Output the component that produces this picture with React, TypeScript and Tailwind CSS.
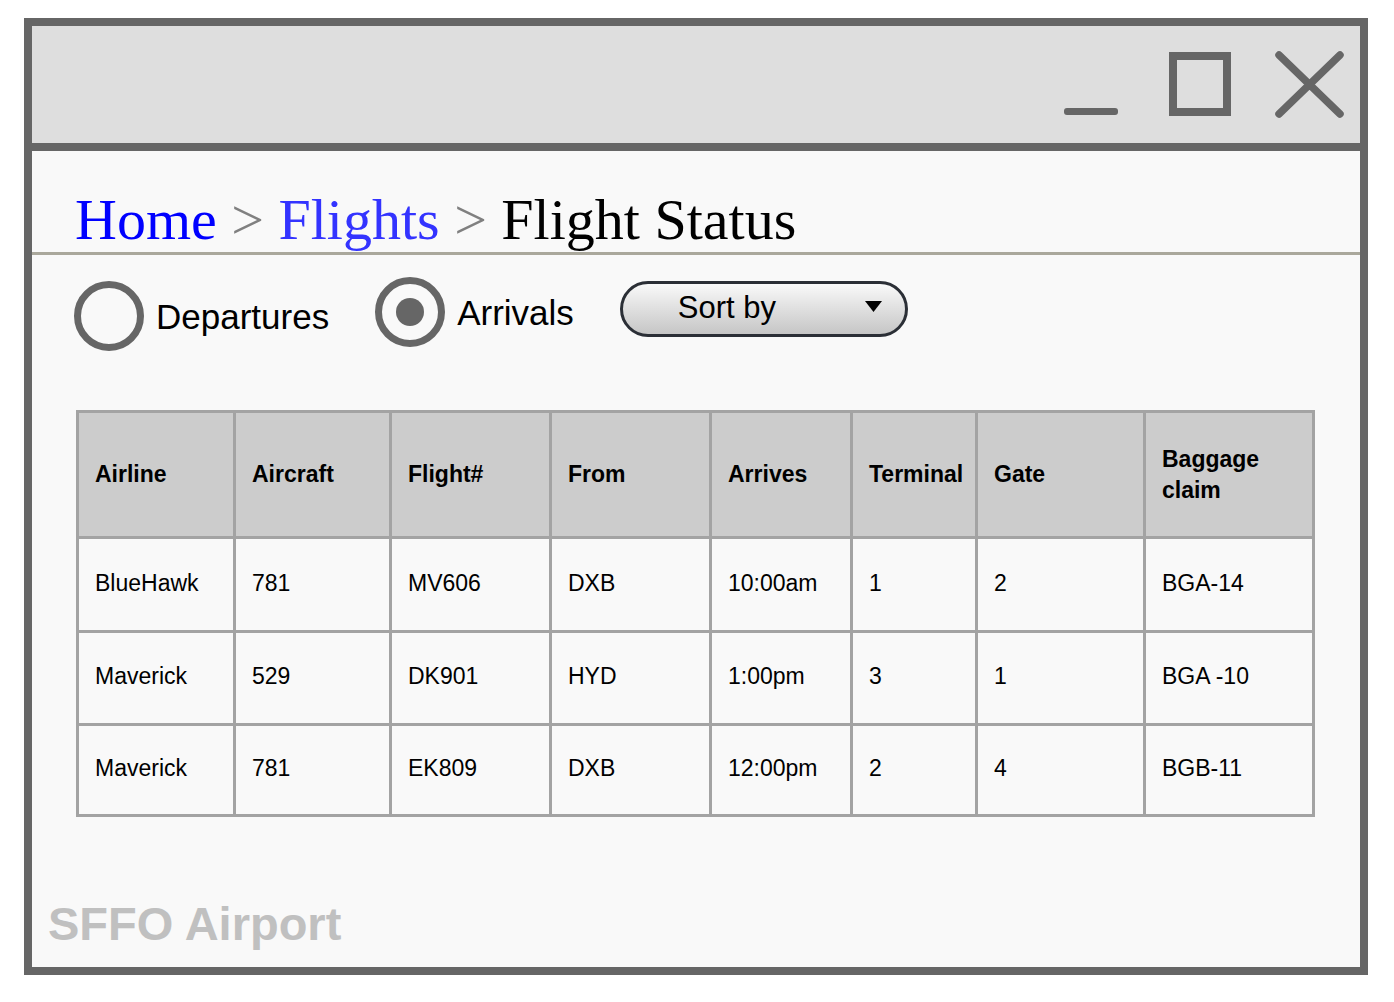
const columns = ["Airline", "Aircraft", "Flight#", "From", "Arrives", "Terminal", "Gate", "Baggage claim"];
const widths = ["w-[157px]", "w-[156px]", "w-[160px]", "w-[160px]", "w-[141px]", "w-[125px]", "w-[168px]", "w-[169px]"];

const rows = [
  ["BlueHawk", "781", "MV606", "DXB", "10:00am", "1", "2", "BGA-14"],
  ["Maverick", "529", "DK901", "HYD", "1:00pm", "3", "1", "BGA -10"],
  ["Maverick", "781", "EK809", "DXB", "12:00pm", "2", "4", "BGB-11"],
];

const rowHeights = ["h-[94px]", "h-[93px]", "h-[91px]"];

const WindowControls = () => (
  <svg width="281" height="117" viewBox="0 0 281 117" fill="none">
    <rect x="1" y="82" width="54" height="7" rx="3" fill="#666666" />
    <rect x="110" y="30" width="54" height="56" stroke="#666666" strokeWidth="8" />
    <path d="M216 29 L277 88 M277 29 L216 88" stroke="#666666" strokeWidth="7.5" strokeLinecap="round" />
  </svg>
);

const Radio = ({ checked, label, className }: { checked?: boolean; label: string; className?: string }) => (
  <label className={`flex items-center ${className ?? ""}`}>
    <span className="flex h-[70px] w-[70px] items-center justify-center rounded-full border-[7px] border-[#666666]">
      {checked && <span className="h-[28px] w-[28px] rounded-full bg-[#666666]" />}
    </span>
    <span className="ml-[12px] text-[35px] leading-none text-black">{label}</span>
  </label>
);

export default function App() {
  return (
    <div className="min-h-screen bg-white font-['Liberation_Sans',Arial,sans-serif]">
      <div className="ml-[24px] pt-[18px]">
        <div className="flex h-[957px] w-[1344px] flex-col border-8 border-[#666666]">
          {/* title bar */}
          <div className="flex h-[125px] shrink-0 justify-end border-b-8 border-[#666666] bg-[#dedede] pr-[16px]">
            <WindowControls />
          </div>

          <div className="flex flex-1 flex-col bg-[#f9f9f9]">
            {/* breadcrumb */}
            <div className="border-b-[3px] border-[#aaa89c] pb-[3px] pl-[43px] pt-[40px] font-['Liberation_Serif','Times_New_Roman',serif] text-[58px] leading-[58px]">
              <span className="text-[#0000ff]">Home</span>
              <span className="text-[#808080]"> &gt; </span>
              <span className="text-[#3333ff]">Flights</span>
              <span className="text-[#808080]"> &gt; </span>
              <span className="text-black">Flight Status</span>
            </div>

            {/* filters */}
            <div className="flex items-start pl-[42px] pt-[22px]">
              <Radio label="Departures" className="mt-[4px]" />
              <Radio label="Arrivals" checked className="ml-[46px]" />
              <button className="ml-[46px] mt-[4px] flex h-[56px] w-[288px] items-center rounded-full border-[3px] border-[#2b2f36] bg-gradient-to-b from-[#f9f9f9] to-[#c6c6c6] pl-[55px] pr-[23px]">
                <span className="mt-[-4px] text-[31px] leading-none text-black">Sort by</span>
                <svg className="ml-auto mt-[-6px]" width="17" height="11" viewBox="0 0 17 11">
                  <path d="M0 0 H17 L8.5 11 Z" fill="#000" />
                </svg>
              </button>
            </div>

            {/* flights table */}
            <table className="ml-[44px] mt-[59px] w-[1236px] table-fixed border-collapse border-[3px] border-[#a3a3a3] text-[23px] text-black">
              <thead>
                <tr className="h-[126px] bg-[#cccccc]">
                  {columns.map((c, i) => (
                    <th
                      key={c}
                      className={`${widths[i]} border-[3px] border-[#a3a3a3] pl-[16px] pr-[3px] text-left align-middle font-bold leading-[31px]`}
                    >
                      {c}
                    </th>
                  ))}
                </tr>
              </thead>
              <tbody>
                {rows.map((r, ri) => (
                  <tr key={ri} className={rowHeights[ri]}>
                    {r.map((v, ci) => (
                      <td key={ci} className="border-[3px] border-[#a3a3a3] pb-[3px] pl-[16px] pr-[3px] align-middle leading-none">
                        {v}
                      </td>
                    ))}
                  </tr>
                ))}
              </tbody>
            </table>

            <div className="mt-auto pb-[20px] pl-[16px] text-[47px] font-bold leading-none text-[#c0c0c0]">SFFO Airport</div>
          </div>
        </div>
      </div>
    </div>
  );
}
